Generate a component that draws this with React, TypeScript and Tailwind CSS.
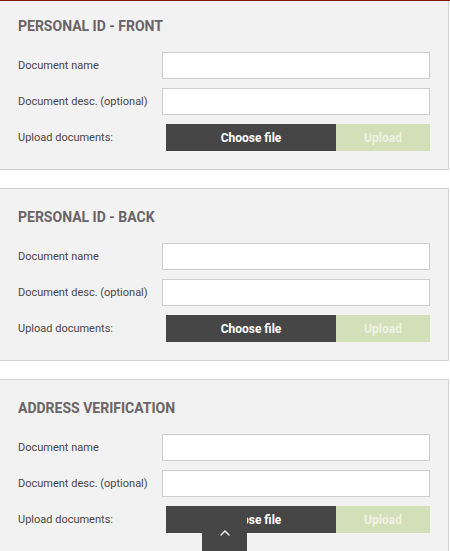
import { ChevronUp } from 'lucide-react'

const sections = ['Personal ID - Front', 'Personal ID - Back', 'Address Verification']

const font = { fontFamily: "Roboto, 'Liberation Sans', sans-serif" }

function UploadPanel({ title }: { title: string }) {
  return (
    <div className="w-[449px] bg-[#f2f2f2] border border-l-0 border-[#d2d2d2] pt-[18px] pb-[18px] pl-[18px] pr-[18px]">
      <h2 className="text-[14px] leading-[20px] font-bold uppercase text-[#696466] mb-[16px]">{title}</h2>
      <div className="flex flex-col gap-[9px]">
        <div className="flex items-center">
          <label className="w-[144px] text-[11px] pt-[1px] text-[#4b4547]">Document name</label>
          <input className="flex-1 h-[27px] bg-white border border-[#cccccc] outline-none" />
        </div>
        <div className="flex items-center">
          <label className="w-[144px] text-[11px] pt-[1px] text-[#4b4547]">Document desc. (optional)</label>
          <input className="flex-1 h-[27px] bg-white border border-[#cccccc] outline-none" />
        </div>
        <div className="flex items-center">
          <label className="w-[148px] text-[11px] pt-[1px] text-[#4b4547]">Upload documents:</label>
          <button className="w-[170px] h-[27px] bg-[#464646] text-white text-[12px] font-bold">Choose file</button>
          <button className="flex-1 h-[27px] bg-[#d3dfb9] text-[#eef2e2] text-[12px] font-bold">Upload</button>
        </div>
      </div>
    </div>
  )
}

export default function App() {
  return (
    <div className="relative w-[450px] h-[551px] overflow-hidden bg-white" style={font}>
      <div className="absolute top-0 left-0 right-0 h-[1px] bg-[#7a1c12] z-10" />
      <div className="flex flex-col gap-[18px] -mt-[3px]">
        {sections.map((s) => (
          <UploadPanel key={s} title={s} />
        ))}
      </div>
      <button className="absolute left-[202px] top-[511px] w-[45px] h-[44px] bg-[#464646] flex items-center justify-center text-white z-10">
        <ChevronUp size={16} strokeWidth={2} />
      </button>
    </div>
  )
}
